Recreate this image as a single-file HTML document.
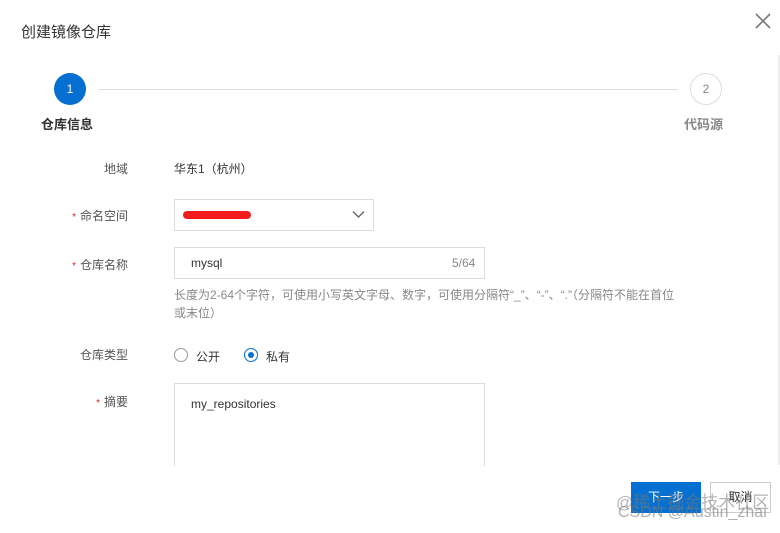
<!DOCTYPE html>
<html><head><meta charset="utf-8"><style>
*{box-sizing:border-box;margin:0;padding:0}
body{width:780px;height:533px;background:#fff;font-family:"Liberation Sans","Noto Sans CJK SC",sans-serif;color:#333;position:relative;overflow:hidden;font-size:12px}
.abs{position:absolute}
.lbl{position:absolute;font-size:12px;color:#555;text-align:right;width:80px;left:48px}
.star{color:#e02020;margin-right:4px;font-size:10px}
.box{position:absolute;border:1px solid #dcdcdc;background:#fff}
</style></head><body>
<div class="abs" style="left:21px;top:21px;font-size:15px;color:#333">创建镜像仓库</div>
<svg class="abs" style="left:755px;top:13px" width="16" height="16" viewBox="0 0 16 16"><path d="M1 1L15 15M15 1L1 15" stroke="#777" stroke-width="1.6"/></svg>
<div class="abs" style="left:778px;top:55px;width:2px;height:410px;background:#ececec"></div>
<div class="abs" style="left:54px;top:73px;width:32px;height:32px;border-radius:50%;background:#0570d1;color:#fff;text-align:center;line-height:32px;font-size:12px">1</div>
<div class="abs" style="left:98px;top:89px;width:580px;height:1px;background:#ddd"></div>
<div class="abs" style="left:690px;top:73px;width:32px;height:32px;border-radius:50%;border:1px solid #ddd;color:#888;text-align:center;line-height:30px;font-size:12px">2</div>
<div class="abs" style="left:41px;top:114px;font-size:13px;font-weight:bold;color:#333">仓库信息</div>
<div class="abs" style="left:684px;top:114px;font-size:13px;font-weight:bold;color:#888">代码源</div>

<div class="lbl" style="top:160px">地域</div>
<div class="abs" style="left:174px;top:160px;color:#333">华东1（杭州）</div>

<div class="lbl" style="top:207px"><span class="star">*</span>命名空间</div>
<div class="box" style="left:174px;top:199px;width:200px;height:32px"></div>
<div class="abs" style="left:183px;top:211px;width:68px;height:8px;border-radius:4px;background:#f21c1c"></div>
<svg class="abs" style="left:352px;top:210px" width="13" height="9" viewBox="0 0 13 9"><path d="M1 1.5L6.5 7L12 1.5" stroke="#666" stroke-width="1.4" fill="none"/></svg>

<div class="lbl" style="top:256px"><span class="star">*</span>仓库名称</div>
<div class="box" style="left:174px;top:247px;width:311px;height:32px"></div>
<div class="abs" style="left:191px;top:256px;color:#333">mysql</div>
<div class="abs" style="left:452px;top:256px;color:#888">5/64</div>
<div class="abs" style="left:174px;top:286px;width:540px;color:#888;line-height:18px">长度为2-64个字符，可使用小写英文字母、数字，可使用分隔符“_”、“-”、“.”（分隔符不能在首位<br>或末位）</div>

<div class="lbl" style="top:346px">仓库类型</div>
<div class="abs" style="left:174px;top:348px;width:14px;height:14px;border-radius:50%;border:1px solid #999"></div>
<div class="abs" style="left:196px;top:348px;color:#333">公开</div>
<div class="abs" style="left:244px;top:348px;width:14px;height:14px;border-radius:50%;border:1px solid #0570d1"></div>
<div class="abs" style="left:248px;top:352px;width:6px;height:6px;border-radius:50%;background:#0570d1"></div>
<div class="abs" style="left:266px;top:348px;color:#333">私有</div>

<div class="lbl" style="top:393px"><span class="star">*</span>摘要</div>
<div class="box" style="left:174px;top:383px;width:311px;height:90px"></div>
<div class="abs" style="left:191px;top:397px;color:#333">my_repositories</div>
<div class="abs" style="left:0;top:466px;width:776px;height:67px;background:#fff"></div>

<div class="abs" style="left:631px;top:482px;width:70px;height:31px;background:#0570d1;color:#fff;text-align:center;line-height:31px;font-size:12px">下一步</div>
<div class="abs" style="left:710px;top:482px;width:61px;height:31px;border:1px solid #ccc;text-align:center;line-height:29px;font-size:12px;color:#333">取消</div>
<div class="abs" style="left:616px;top:488px;font-size:17px;color:rgba(120,120,120,0.55)">@稀土掘金技术社区</div>
<div class="abs" style="left:618px;top:504px;font-size:16px;color:rgba(120,120,120,0.6)">CSDN @Austin_zhai</div>
</body></html>
